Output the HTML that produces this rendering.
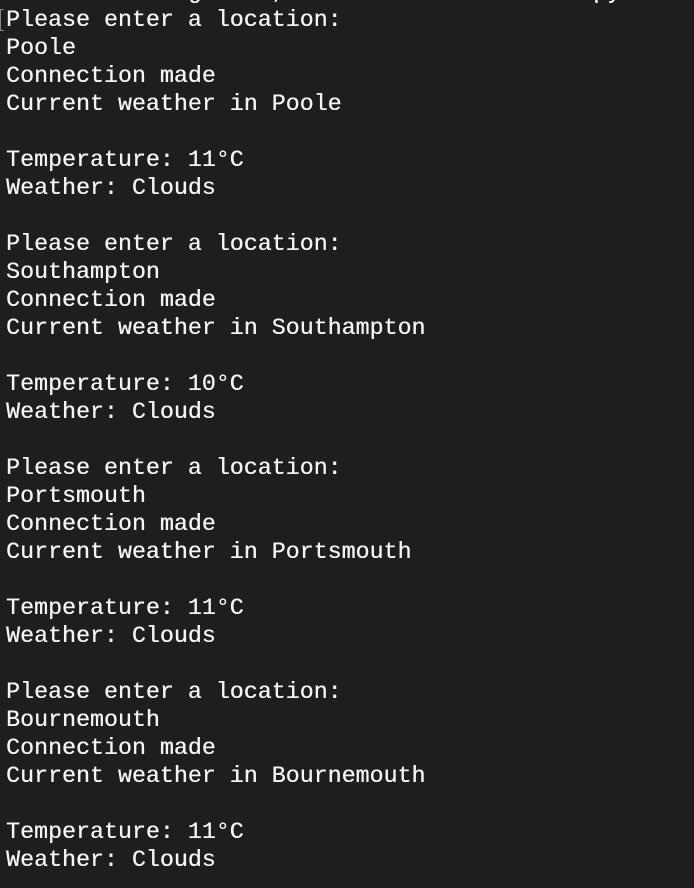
<!DOCTYPE html>
<html><head><style>
html,body{margin:0;padding:0;background:#1e1e1e;width:694px;height:888px;overflow:hidden}
pre{margin:0;position:absolute;left:6px;top:-22px;font-family:"Liberation Mono",monospace;font-size:23.3px;line-height:28px;color:#f4f4f4;white-space:pre;text-shadow:0.3px 0 0 #f4f4f4}
.c{position:absolute;left:0;top:9px;width:3px;height:20px;border:1px solid #888;border-right:none}
</style></head><body>
<pre>             g     ,                      py
Please enter a location:
Poole
Connection made
Current weather in Poole

Temperature: 11°C
Weather: Clouds

Please enter a location:
Southampton
Connection made
Current weather in Southampton

Temperature: 10°C
Weather: Clouds

Please enter a location:
Portsmouth
Connection made
Current weather in Portsmouth

Temperature: 11°C
Weather: Clouds

Please enter a location:
Bournemouth
Connection made
Current weather in Bournemouth

Temperature: 11°C
Weather: Clouds
</pre>
<div class="c"></div>
</body></html>
